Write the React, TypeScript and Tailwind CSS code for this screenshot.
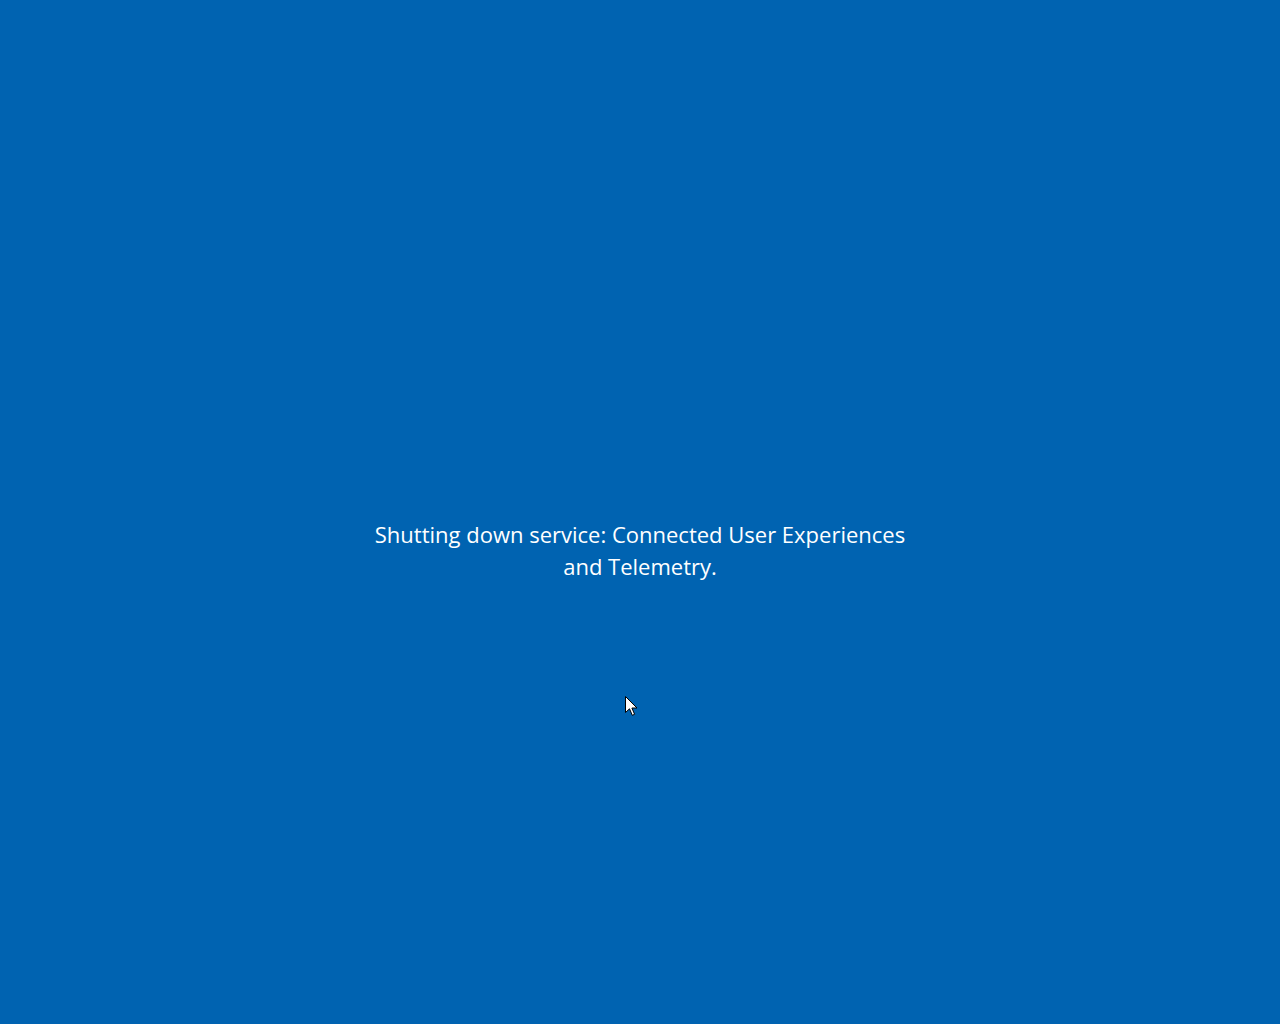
export default function App() {
  return (
    <div className="relative h-[1024px] w-[1280px] overflow-hidden bg-[#0063b1]">
      <div className="flex flex-col items-center pt-[518px] text-center text-[22px] leading-[32px] text-white [font-family:'Open_Sans','Noto_Sans',sans-serif]">
        <p>Shutting down service: Connected User Experiences</p>
        <p>and Telemetry.</p>
      </div>

      {/* mouse pointer */}
      <svg
        className="absolute left-[625px] top-[696px]"
        width="14"
        height="22"
        viewBox="0 0 14 22"
      >
        <path
          d="M0.5 0.5 L0.5 16.5 L4.5 12.8 L7.3 19.3 L9.6 18.3 L6.9 12 L12 12 Z"
          fill="#ffffff"
          stroke="#000000"
          strokeWidth="1"
          strokeLinejoin="miter"
        />
      </svg>
    </div>
  );
}
